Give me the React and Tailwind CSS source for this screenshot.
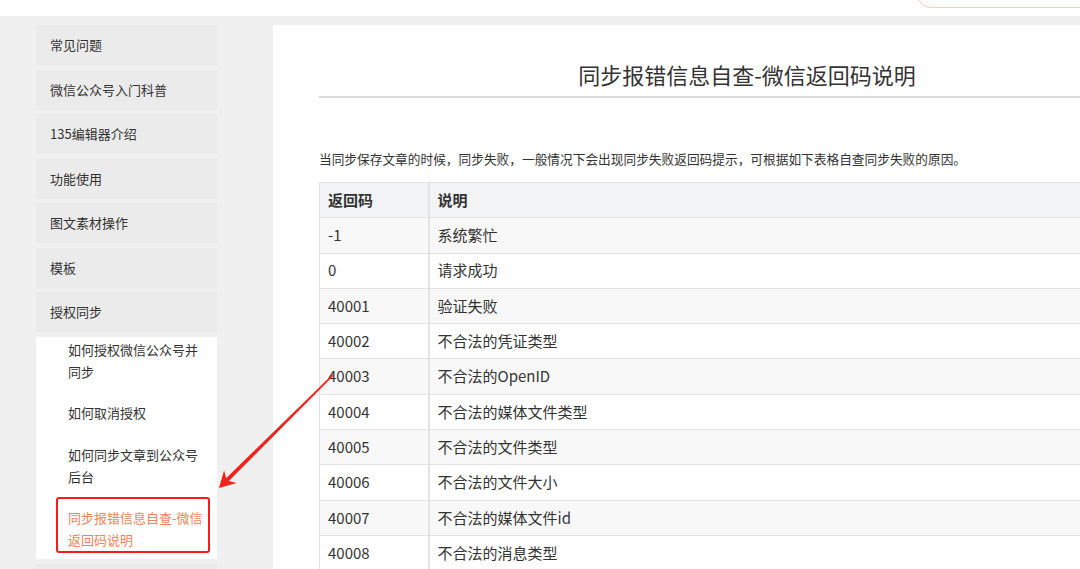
import React from "react";

const menu = [
  "常见问题",
  "微信公众号入门科普",
  "135编辑器介绍",
  "功能使用",
  "图文素材操作",
  "模板",
  "授权同步",
];

const subMenu = [
  { title: "如何授权微信公众号并同步" },
  { title: "如何取消授权" },
  { title: "如何同步文章到公众号后台" },
  { title: "同步报错信息自查-微信返回码说明", active: true },
];

const codes = [
  ["-1", "系统繁忙"],
  ["0", "请求成功"],
  ["40001", "验证失败"],
  ["40002", "不合法的凭证类型"],
  ["40003", "不合法的OpenID"],
  ["40004", "不合法的媒体文件类型"],
  ["40005", "不合法的文件类型"],
  ["40006", "不合法的文件大小"],
  ["40007", "不合法的媒体文件id"],
  ["40008", "不合法的消息类型"],
];

const App = () => {
  return (
    <div
      className="relative w-[1080px] h-[569px] overflow-hidden bg-[#f0f0f0] text-[#333]"
      style={{ fontFamily: '"Noto Sans CJK SC", "Noto Sans", sans-serif' }}
    >
      {/* 顶部栏 */}
      <div className="h-4 bg-white flex justify-end overflow-hidden">
        <div className="mt-[-24px] mr-[-60px] h-[32px] w-[224px] shrink-0 rounded-full border border-[#fccbb0]" />
      </div>

      <div className="flex items-start pt-[9px] pl-[36px]">
        {/* 左侧菜单 */}
        <div className="w-[181px] shrink-0 flex flex-col">
          {menu.map((item) => (
            <div
              key={item}
              className="h-10 mb-[4.5px] last:mb-0 flex items-center pl-[14px] bg-[#ebebeb] text-[13px]"
            >
              {item}
            </div>
          ))}
          <div className="bg-white flex flex-col gap-[19.5px] pt-[2px] pb-[8px]">
            {subMenu.map((item) => (
              <div
                key={item.title}
                className={`relative pl-[32px] pr-[14px] text-[13px] leading-[22px] ${
                  item.active ? "text-[#f5845a]" : "text-[#333]"
                }`}
              >
                {item.title}
                {item.active && (
                  <span className="absolute left-[20px] right-[7px] top-[-10px] bottom-[-2px] border-2 border-[#ff1a1a] rounded-[3px]" />
                )}
              </div>
            ))}
          </div>
          <div className="h-10 mt-[4.5px] bg-[#ebebeb]" />
        </div>

        {/* 主体内容 */}
        <div className="ml-[56px] flex-1 min-w-0 bg-white h-[560px] overflow-hidden pl-[46px]">
          <div className="w-[856px]">
            <h1 className="pt-[33px] pb-[6px] text-center text-[22px] leading-[32px] font-normal text-[#333]">
              同步报错信息自查-微信返回码说明
            </h1>
            <div className="h-[2px] bg-[#dcdcdc]" />
            <p className="mt-[51px] text-[12.7px] leading-[20px] text-[#333]">
              当同步保存文章的时候，同步失败，一般情况下会出现同步失败返回码提示，可根据如下表格自查同步失败的原因。
            </p>
            <table className="mt-[13px] w-full border-collapse text-[15px]">
              <thead>
                <tr className="bg-[#f1f3f5] h-[35.3px]">
                  <th className="w-[109px] text-left font-bold px-[8px] border border-[#e3e3e3] border-r-2">
                    返回码
                  </th>
                  <th className="text-left font-bold px-[8px] border border-[#e3e3e3]">说明</th>
                </tr>
              </thead>
              <tbody>
                {codes.map(([code, desc], i) => (
                  <tr
                    key={code}
                    className={`h-[35.3px] ${i % 2 === 0 ? "bg-[#f8f8f8]" : "bg-white"}`}
                  >
                    <td className="px-[8px] border border-[#e3e3e3] border-r-2">{code}</td>
                    <td className="px-[8px] border border-[#e3e3e3]">{desc}</td>
                  </tr>
                ))}
              </tbody>
            </table>
          </div>
        </div>
      </div>

      {/* 标注箭头 */}
      <svg
        className="absolute left-0 top-0 pointer-events-none"
        width="1080"
        height="569"
        viewBox="0 0 1080 569"
      >
        <polygon
          fill="#f5211b"
          points="333.6,375.6 228.9,481 236.7,483.1 219,488 224.1,470.3 226.1,478.2 332.4,374.4"
        />
      </svg>
    </div>
  );
};

export default App;
